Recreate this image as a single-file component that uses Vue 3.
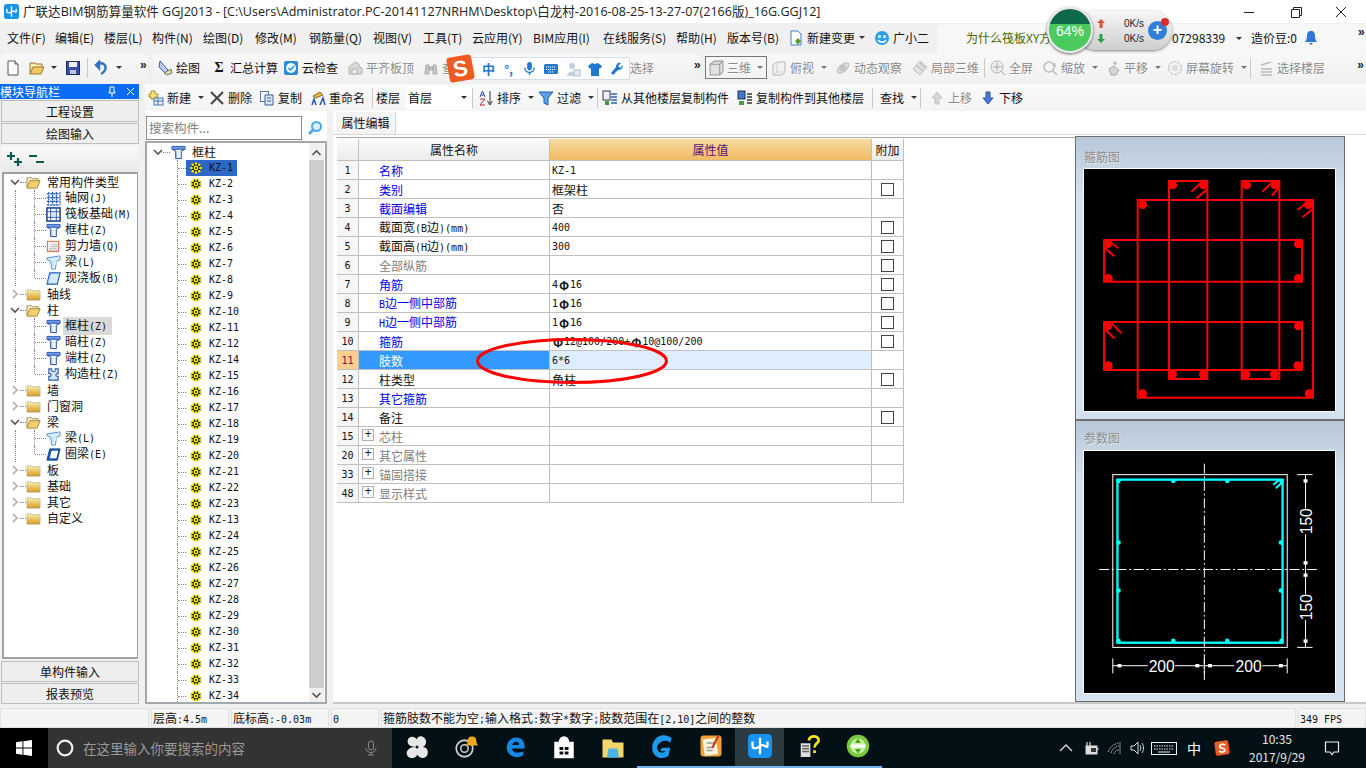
<script setup>
import { h } from 'vue'

const icons = {
  column: '<path d="M1 1.500h14v3l-4 2v8H5v-8l-4-2z" fill="#eef5ff" stroke="#1a46a0"/><path d="M1.500 2h13v2.500h-13z" fill="#6f9fe6"/><path d="M1 4.500h14" stroke="#1a46a0"/><path d="M6 7v7" stroke="#8db6ee"/>',
  grid: '<path d="M1 3h14M1 7h14M1 11h14M1 15h14M3 1v14M7 1v14M11 1v14M15 1v14" stroke="#1f55b0" stroke-width="1.200" stroke-dasharray="2.500 .8"/>',
  raft: '<rect x="1" y="1" width="14" height="14" fill="#fff" stroke="#163f86" stroke-width="1.600"/><path d="M1 5h14M1 11h14M5 1v14M11 1v14" stroke="#1f55a8"/><rect x="6" y="6" width="4" height="4" fill="#cfe0f5"/>',
  wall: '<rect x="1.500" y="2.500" width="12" height="11" fill="#f2f2f2" stroke="#dc6a30"/><path d="M3 12h9M4 10h8M5 8h7M7 6h5" stroke="#8a8a8a" stroke-dasharray="1 1"/><path d="M15 5v1M15 9v1" stroke="#dc6a30"/>',
  beam: '<path d="M1 3l14-2v4l-4 2-1 8H6L5 7 1 5z" fill="#cfe6fb" stroke="#4a90d8"/><path d="M6 6l8-4M8 14l3-7" stroke="#fff"/>',
  slab: '<path d="M4 2h11l-3 12H1z" fill="#d7e8fb" stroke="#1f5fb8" stroke-width="1.200"/><path d="M5 3l-3 10" stroke="#8ab8ef"/>',
  ring: '<path d="M4 2h11l-3 12H1z" fill="#1f5fb8" stroke="#123f86"/><path d="M6 4h7l-2 8H4z" fill="#fff"/>',
  puzzle: '<path d="M3 2h3v1a2 2 0 0 0 4 0V2h3v5h-1a1.500 1.500 0 0 0 0 3h1v4H3v-4h1a1.500 1.500 0 0 0 0-3H3z" fill="#d4e4f8" stroke="#2c5ca8" stroke-width="1.200"/>',
  folder: '<linearGradient id="fg" x1="0" y1="0" x2="0" y2="1"><stop offset="0" stop-color="#fdf0b0"/><stop offset="1" stop-color="#d99a1c"/></linearGradient><path d="M1 3h5l1 1h8v10H1z" fill="url(#fg)" stroke="#b0a890" stroke-width=".7"/>',
  folderOpen: '<path d="M1 13V3h5l1 1h6v2" fill="#fff3c4" stroke="#9a8a60"/><path d="M1 14l3-8h11l-3 8z" fill="#f3cf72" stroke="#a8863a"/>',
  gear: '<circle cx="6" cy="6" r="5" fill="#222"/><g fill="#f8f000"><circle cx="6" cy="1.500" r="1.300"/><circle cx="6" cy="10.500" r="1.300"/><circle cx="1.500" cy="6" r="1.300"/><circle cx="10.500" cy="6" r="1.300"/><circle cx="2.800" cy="2.800" r="1.300"/><circle cx="9.200" cy="2.800" r="1.300"/><circle cx="2.800" cy="9.200" r="1.300"/><circle cx="9.200" cy="9.200" r="1.300"/><circle cx="6" cy="6" r="2.400"/></g><circle cx="6" cy="6" r="1" fill="#222"/>',
  newdoc: '<path d="M3 1h7l3 3v11H3z" fill="#fff" stroke="#555"/><path d="M10 1v3h3" fill="#ddd" stroke="#555"/>',
  open: '<path d="M1 14V3h5l1 1h6v3" fill="#fde9a8" stroke="#96793a"/><path d="M1 14l3-7h11l-3 7z" fill="#f2c65e" stroke="#96793a"/>',
  save: '<rect x="1.500" y="1.500" width="13" height="13" fill="#3a4ea8" stroke="#1a2a6a"/><rect x="4" y="2" width="8" height="5" fill="#eef"/><rect x="5" y="10" width="6" height="4" fill="#bcc6dc"/>',
  undo: '<path d="M5 2v6l-3-3zM4 4c5-2 9 1 7 6-1 2-2 3-4 4" fill="none" stroke="#2f6fc0" stroke-width="2.400"/>',
  draw: '<path d="M3 1l8 9-3 3-6-6z" fill="#b7cdf2" stroke="#3c5fa8"/><path d="M7 13l7-4 1 4-5 2z" fill="#e6d8a0" stroke="#777"/>',
  cloud: '<rect x="1" y="1" width="14" height="14" rx="2" fill="#2a8bdc"/><circle cx="8" cy="8" r="5" fill="#eaf5ff"/><path d="M5.500 8l2 2 3.500-4" fill="none" stroke="#2a8bdc" stroke-width="1.500"/>',
  flat: '<path d="M2 14V7l6-5 4 2v3l3 1v6z" fill="#d8d8d8" stroke="#b4b4b4"/><path d="M5 9h5v5H5z" fill="#efefef" stroke="#b4b4b4"/>',
  bino: '<path d="M2 14l1-9h3v9zM10 14V5h3l1 9zM6 7h4v3H6z" fill="#c8c8c8" stroke="#aaa"/>',
  cube: '<path d="M2 5l4-3h8v10l-3 3H2z" fill="#e2e2e2" stroke="#999"/><path d="M2 5h9v10M11 5l3-3" fill="none" stroke="#999"/>',
  cube2: '<path d="M2 5l4-3h8v10l-3 3H2z" fill="#f2f2f2" stroke="#b5b5b5"/><path d="M6 2v10h8M6 12l-4 3" fill="none" stroke="#ccc"/>',
  orbit: '<ellipse cx="8" cy="8" rx="7" ry="3.500" transform="rotate(-40 8 8)" fill="#ddd" stroke="#bbb"/><circle cx="8" cy="8" r="3.500" fill="#c4c4c4"/>',
  local: '<path d="M8 1l7 6-7 8-7-6z" fill="#e2e2e2" stroke="#bbb"/><path d="M4 5l7 6M8 3l5 5" stroke="#aaa"/>',
  full: '<circle cx="7" cy="7" r="6" fill="#eee" stroke="#b5b5b5"/><path d="M7 3v8M3 7h8M11 11l4 4" stroke="#aaa"/>',
  zoom: '<circle cx="7" cy="7" r="5" fill="#f4f4f4" stroke="#bbb" stroke-width="1.500"/><path d="M11 11l4 4M13 3v4" stroke="#bbb" stroke-width="1.500"/>',
  pan: '<path d="M10 1v4M8 3h4M4 9l5-3 5 4-3 5H6z" fill="#d5d5d5" stroke="#aaa"/>',
  rot: '<circle cx="8" cy="8" r="6.500" fill="#f2f2f2" stroke="#bbb" stroke-dasharray="3 1"/><circle cx="8" cy="8" r="3" fill="#ddd"/>',
  floors: '<path d="M3 5l10-3M3 9h11M3 12h11M3 15h11" stroke="#bbb" stroke-width="1.500"/>',
  add: '<path d="M3 1h4v3h3v3H7v2H3V7H1V4h2z" fill="#f5e27a" stroke="#a8922a"/><rect x="6" y="8" width="9" height="7" fill="#e4eefa" stroke="#5577aa"/><path d="M6 11h9M10 8v7" stroke="#5577aa"/>',
  del: '<path d="M2 2l12 12M14 2L2 14" stroke="#444" stroke-width="2"/>',
  copy: '<rect x="1.500" y="1.500" width="8" height="10" fill="#f8f8f8" stroke="#5577aa"/><path d="M6 5h8v10H6z" fill="#dbe7f6" stroke="#3f6096"/><path d="M8 8h4M8 11h4" stroke="#3f6096"/>',
  rename: '<path d="M3 6l7-4 3 3-7 3z" fill="#e0b94a" stroke="#8a6a20"/><path d="M2 15l2-6 2 6M10 15l3-7 2 7" fill="none" stroke="#2b57a6" stroke-width="1.500"/>',
  sort: '<path d="M12 1v13M9.500 11l2.500 4 2.500-4" fill="none" stroke="#333"/><path d="M2 7l2.500-6L7 7M3 5h3" fill="none" stroke="#2a4f9e"/><path d="M2 9h5l-5 6h5" fill="none" stroke="#b03030"/>',
  filter: '<path d="M1 2h14l-5 6v7l-4-2V8z" fill="#5aa0e8" stroke="#1f5fa8"/>',
  fromfloor: '<rect x="1" y="1" width="7" height="9" fill="#eef" stroke="#335"/><path d="M3 11h4v4H3z" fill="#3a9a3a"/><path d="M9 4h6M9 7h6M9 10h6M9 13h6" stroke="#2f66b8" stroke-width="1.500"/>',
  tofloor: '<rect x="1" y="1" width="7" height="8" fill="#3f78d0" stroke="#234"/><path d="M2 11h5v4H2z" fill="#4a9e4a"/><path d="M10 4h5M10 7h5M10 10h5M10 13h5" stroke="#333" stroke-width="1.500"/>',
  up: '<path d="M8 2l5 6h-3v6H6V8H3z" fill="#d5d5d5" stroke="#c4c4c4"/>',
  down: '<path d="M6 2h4v6h3l-5 6-5-6h3z" fill="#4a78d8" stroke="#2c52a8"/>',
  changeDoc: '<path d="M3 1h7l3 3v11H3z" fill="#fff" stroke="#3a80d0"/><path d="M10 8l3 3-3 4-3-4z" fill="#5aa02c"/>',
  mascot: '<circle cx="8" cy="8" r="7" fill="#2aa0ec"/><circle cx="5.500" cy="6.500" r="1.500" fill="#fff"/><circle cx="10.500" cy="6.500" r="1.500" fill="#fff"/><path d="M4 10c2 3 6 3 8 0" fill="none" stroke="#fff" stroke-width="1.400"/>',
  bell: '<path d="M8 1c3 0 4 2 4 5 0 3 1 5 2 6H2c1-1 2-3 2-6 0-3 1-5 4-5zM6 13h4l-2 2z" fill="#2a78dc"/>',
  mic: '<rect x="5.500" y="1" width="5" height="9" rx="2.500" fill="#1f78d0"/><path d="M3 7c0 7 10 7 10 0M8 12v3" fill="none" stroke="#1f78d0" stroke-width="1.400"/>',
  kb: '<rect x="1" y="3" width="14" height="10" rx="1.500" fill="#1f78d0"/><path d="M3 6h10M3 8.500h10M5 11h6" stroke="#fff" stroke-dasharray="1.200 .8"/>',
  user: '<circle cx="7" cy="5" r="3" fill="#c0d0e0"/><path d="M2 15c0-6 10-6 10 0z" fill="#c0d0e0"/><rect x="9" y="9" width="6" height="6" fill="#e4eaf0" stroke="#b0c0d0"/>',
  shirt: '<path d="M5 2l3 1 3-1 4 3-2 3-1-1v8H4V7L3 8 1 5z" fill="#1f78d0"/>',
  wrench: '<path d="M14 4l-3 3-2-2 3-3c-3-1-5 1-5 4L2 12l2 2 5-5c3 0 5-2 5-5z" fill="#1f78d0"/>',
  winlogo: '<path d="M0 2.200L6.500 1.300v6.200H0zM7.400 1.200L16 0v7.500H7.400zM0 8.400h6.500v6.300L0 13.800zM7.400 8.400H16V16l-8.600-1.200z" fill="#fff"/>',
  micOutline: '<rect x="5.500" y="1" width="5" height="9" rx="2.500" fill="none" stroke="#8a8a8a"/><path d="M3 8c0 6 10 6 10 0M8 12.500V15M5 15h6" fill="none" stroke="#8a8a8a"/>',
  pinwheel: '<path d="M8 8C3 8 1 6 2 3s5-2 6 0c0-2 3-3 5-1s1 5-1 6c2 0 4 2 3 5s-5 3-7 0c0 2-3 3-5 2S0 11 3 9c1-.7 3-1 5-1z" fill="#e8e8e8"/><circle cx="8" cy="8" r="1" fill="#0a1a20"/>',
  swirl: '<circle cx="7" cy="9" r="5.500" fill="none" stroke="#ccc" stroke-width="1.200"/><circle cx="7" cy="9" r="2.500" fill="none" stroke="#ccc"/><path d="M12 1c2 0 3 1 3 4l1 2H8l1-2c0-3 1-4 3-4z" fill="#eda91f"/>',
  edge: '<path d="M2 9c0-5 3-8 7-8s6 3 6 7v1H6c0 3 4 4 8 2v3c-5 3-11 1-12-5zM6 6.500h5c0-3-4-3-5 0z" fill="#1689e8"/>',
  store: '<path d="M2 5h12v10H2zM5 5c0-5 6-5 6 0" fill="#fff" stroke="#fff"/><path d="M5 8h2.500v2H5zM8.500 8H11v2H8.500zM5 11h2.500v2H5zM8.500 11H11v2H8.500z" fill="#111"/>',
  explorer: '<path d="M1 3h6l1 2h7v10H1z" fill="#f5d66c"/><path d="M5 9h6l1 6H4z" fill="#4cb3e8"/>',
  gApp: '<path d="M14 3C8-1 2 3 2 9s6 8 10 5l1-5H8l-1 2h3c-1 2-5 1-5-2s5-6 8-3z" fill="#1e9aec"/>',
  note: '<rect x="1" y="1" width="14" height="14" rx="2" fill="#f2a03a"/><rect x="3" y="3" width="9" height="11" fill="#fff4d8" transform="rotate(-8 8 8)"/><path d="M5 6h5M5 9h5M5 11h4" stroke="#999"/><path d="M13 1l-4 8" stroke="#c8401a" stroke-width="1.500"/>',
  plusApp: '<rect width="16" height="16" rx="3" fill="#1693ee"/><path d="M8 2.500v11M3 5v3c0 2 3 2 5 0s5 2 5 0V5" fill="none" stroke="#fff" stroke-width="1.500"/>',
  help: '<rect x="2" y="6" width="7" height="10" fill="#ddd"/><path d="M3 8h5M3 10h5M3 12h5" stroke="#666"/><path d="M8 4c0-4 7-4 7 0 0 2-3 2-3 5M12 11v2" fill="none" stroke="#f5e31a" stroke-width="2"/>',
  greenApp: '<circle cx="8" cy="8" r="7.500" fill="#7ac943"/><circle cx="8" cy="8" r="5" fill="#c8f0a0"/><path d="M3 8h10" stroke="#fff" stroke-width="2"/><path d="M8 3l2 3H6zM8 13l-2-3h4z" fill="#4a9e20"/>',
  cortana: '<circle cx="8" cy="8" r="6.500" fill="none" stroke="#eee" stroke-width="2"/>',
  caretUp: '<path d="M2 11l6-6 6 6" fill="none" stroke="#ddd" stroke-width="1.300"/>',
  battery: '<rect x="3" y="6" width="11" height="8" fill="#ddd" stroke="#ddd"/><path d="M4 2v4M7 2v4M14 9h2" stroke="#ddd" stroke-width="1.200"/><rect x="8" y="8" width="5" height="4" fill="#333"/>',
  wifi: '<path d="M1 12a14 14 0 0 1 11-9M4 13a9 9 0 0 1 8-7M7 14a5 5 0 0 1 5-4" fill="none" stroke="#ccc" stroke-dasharray="1.500 1"/><path d="M13 2v12" stroke="#888"/>',
  sound: '<path d="M2 6h3l4-4v12l-4-4H2z" fill="none" stroke="#ddd"/><path d="M11 5c1 2 1 4 0 6M13 3c2 3 2 7 0 10" fill="none" stroke="#ddd"/>',
  keyboard: '<rect x=".5" y="2.500" width="25" height="12" fill="none" stroke="#eee"/><path d="M3 6h20M3 9h20" stroke="#eee" stroke-dasharray="1.500 1"/><path d="M7 12h12" stroke="#eee"/>',
  sogouTray: '<rect x="1" y="1" width="14" height="14" rx="2" transform="rotate(-8 8 8)" fill="#ea5a22"/><path d="M11 5c-3-2-6 0-5 2s5 1 5 3-3 3-6 1" fill="none" stroke="#fff" stroke-width="1.800"/>',
  notif: '<path d="M1.500 2h13v10H10l-2 2.500L6 12H1.500z" fill="none" stroke="#eee" stroke-width="1.200"/>',
  chevDown: '<path d="M1 3l4 4 4-4" fill="none" stroke="#555" stroke-width="1.600"/>',
  chevRight: '<path d="M3 1l4 4-4 4" fill="none" stroke="#aaa" stroke-width="1.600"/>',
  plusplus: '<path d="M4 1v8M0 5h8M11 7v8M7 11h8" stroke="#0c5a52" stroke-width="2.200"/>',
  minusminus: '<path d="M0 5h8M7 11h8" stroke="#0c5a52" stroke-width="2.200"/>',
  search: '<circle cx="9.500" cy="6.500" r="4.500" fill="#d8f0ff" stroke="#4aa8e8" stroke-width="2"/><path d="M6 10l-4 4" stroke="#4aa8e8" stroke-width="2.600"/>'
}

const Ic = (p) => h('svg', { class: 'ic', width: p.w || 16, height: p.h || p.w || 16, viewBox: p.vb || '0 0 16 16', innerHTML: icons[p.n] })
Ic.props = ['n', 'w', 'h', 'vb']

const T = (p) => p.s.split(/([\x00-\x7f]+|Φ)/).filter(Boolean).map((t) => h('span', { class: t === 'Φ' ? 'phi' : /^[\x00-\x7f]/.test(t) ? 'l' : 'c' }, t))
T.props = ['s']

const place = (list, end) => list.map((it, i) => ({ ...it, w: (i + 1 < list.length ? list[i + 1].x : end) - it.x }))

const menus = place([
  { x: 7, t: '文件(F)' }, { x: 55, t: '编辑(E)' }, { x: 104, t: '楼层(L)' }, { x: 152, t: '构件(N)' },
  { x: 203, t: '绘图(D)' }, { x: 255, t: '修改(M)' }, { x: 309, t: '钢筋量(Q)' }, { x: 373, t: '视图(V)' },
  { x: 423, t: '工具(T)' }, { x: 472, t: '云应用(Y)' }, { x: 533, t: 'BIM应用(I)' }, { x: 603, t: '在线服务(S)' },
  { x: 676, t: '帮助(H)' }, { x: 727, t: '版本号(B)' },
  { x: 788, t: '新建变更', i: 'changeDoc', c: 1 }, { x: 874, t: '广小二', i: 'mascot' }
], 937)

const tb2 = place([
  { x: 157, i: 'draw', t: '绘图' }, { x: 211, sym: 'Σ', t: '汇总计算' }, { x: 283, i: 'cloud', t: '云检查' },
  { x: 347, i: 'flat', t: '平齐板顶', d: 1 }, { x: 423, i: 'bino', t: '查', d: 1 }, { x: 630, t: '选择', d: 1 }
], 697)

const tb3 = place([
  { x: 771, i: 'cube2', t: '俯视', d: 1, c: 1 }, { x: 835, i: 'orbit', t: '动态观察', d: 1 }, { x: 912, i: 'local', t: '局部三维', d: 1 },
  { x: 984, sep: 1 }, { x: 990, i: 'full', t: '全屏', d: 1 }, { x: 1042, i: 'zoom', t: '缩放', d: 1, c: 1 },
  { x: 1105, i: 'pan', t: '平移', d: 1, c: 1 }, { x: 1167, i: 'rot', t: '屏幕旋转', d: 1, c: 1 }, { x: 1250, sep: 1 },
  { x: 1258, i: 'floors', t: '选择楼层', d: 1 }
], 1350)

const row2 = place([
  { x: 148, i: 'add', t: '新建', c: 1 }, { x: 209, i: 'del', t: '删除' }, { x: 259, i: 'copy', t: '复制' },
  { x: 310, i: 'rename', t: '重命名' }, { x: 372, sep: 1 }, { x: 376, t: '楼层' }, { x: 406, sel: '首层' },
  { x: 472, sep: 1 }, { x: 478, i: 'sort', t: '排序', c: 1 }, { x: 538, i: 'filter', t: '过滤', c: 1 },
  { x: 597, sep: 1 }, { x: 602, i: 'fromfloor', t: '从其他楼层复制构件' }, { x: 737, i: 'tofloor', t: '复制构件到其他楼层' },
  { x: 872, sep: 1 }, { x: 880, t: '查找', c: 1 }, { x: 920, sep: 1 }, { x: 929, i: 'up', t: '上移', d: 1 }, { x: 980, i: 'down', t: '下移' }
], 1040)

const tree = [
  { t: '常用构件类型', open: 1, kids: [['grid', '轴网(J)'], ['raft', '筏板基础(M)'], ['column', '框柱(Z)'], ['wall', '剪力墙(Q)'], ['beam', '梁(L)'], ['slab', '现浇板(B)']] },
  { t: '轴线' },
  { t: '柱', open: 1, kids: [['column', '框柱(Z)', 1], ['column', '暗柱(Z)'], ['column', '端柱(Z)'], ['puzzle', '构造柱(Z)']] },
  { t: '墙' }, { t: '门窗洞' },
  { t: '梁', open: 1, kids: [['beam', '梁(L)'], ['ring', '圈梁(E)']] },
  { t: '板' }, { t: '基础' }, { t: '其它' }, { t: '自定义' }
]

const order = [1,2,3,4,5,6,7,8,9,10,11,12,14,15,16,17,18,19,20,21,22,23,13,24,25,26,27,28,29,30,31,32,33,34]
const kz = order.map((n) => 'KZ-' + n)

const rows = [
  { n: '1', t: '名称', v: 'KZ-1', k: 'b' },
  { n: '2', t: '类别', v: '框架柱', k: 'b', cb: 1 },
  { n: '3', t: '截面编辑', v: '否', k: 'b' },
  { n: '4', t: '截面宽(B边)(mm)', v: '400', cb: 1 },
  { n: '5', t: '截面高(H边)(mm)', v: '300', cb: 1 },
  { n: '6', t: '全部纵筋', v: '', k: 'g', cb: 1 },
  { n: '7', t: '角筋', v: '4Φ16', k: 'b', cb: 1 },
  { n: '8', t: 'B边一侧中部筋', v: '1Φ16', k: 'b', cb: 1 },
  { n: '9', t: 'H边一侧中部筋', v: '1Φ16', k: 'b', cb: 1 },
  { n: '10', t: '箍筋', v: 'Φ12@100/200+Φ10@100/200', k: 'b', cb: 1 },
  { n: '11', t: '肢数', v: '6*6', picked: 1 },
  { n: '12', t: '柱类型', v: '角柱', cb: 1 },
  { n: '13', t: '其它箍筋', v: '', k: 'b' },
  { n: '14', t: '备注', v: '', cb: 1 },
  { n: '15', t: '芯柱', v: '', k: 'g', plus: 1 },
  { n: '20', t: '其它属性', v: '', k: 'g', plus: 1 },
  { n: '33', t: '锚固搭接', v: '', k: 'g', plus: 1 },
  { n: '48', t: '显示样式', v: '', k: 'g', plus: 1 }
]

const stirrupDots = [[293,150],[385,150],[515,150],[600,150],[203,209],[700,209],[98,327],[670,327],[100,430],[670,430],[98,573],[670,573],[100,692],[668,692],[293,718],[385,718],[513,718],[598,718],[203,776],[702,776]]
const stirrupRects = [[188,195,526,593],[87,315,594,125],[87,561,594,144],[282,138,115,594],[500,138,113,594]]
const stirrupHooks = [[349,170,378,143],[365,190,397,162],[562,170,590,143],[590,182,612,158],[668,225,700,198],[683,247,712,222],[105,320,130,340],[90,340,118,364],[110,565,140,595],[92,585,118,610]]
const paramDots = [[130,182],[295,182],[457,182],[620,182],[130,662],[295,662],[457,662],[620,662],[130,367],[130,511],[618,367],[618,511]]
const ticks = [[133,737],[367,737],[405,737],[618,737],[692,182],[692,428],[692,465],[692,663]]

const taskIcons = [
  { n: 'pinwheel', w: 24 }, { n: 'swirl', w: 24 }, { n: 'edge', w: 22 }, { n: 'store', w: 24 }, { n: 'explorer', w: 24 },
  { n: 'gApp', w: 26, on: 1 }, { n: 'note', w: 24, on: 1 }, { n: 'plusApp', w: 24, on: 1, act: 1 }, { n: 'help', w: 22, on: 1 }, { n: 'greenApp', w: 24, on: 1 }
]
const tray = [
  { n: 'caretUp', b: 25 }, { n: 'battery', b: 25 }, { n: 'wifi', b: 23 }, { n: 'sound', b: 21 },
  { n: 'keyboard', b: 34, w: 26, vb: '0 0 26 16' }, { t: '中', b: 26 }, { n: 'sogouTray', b: 30 }
]
</script>

<template>
  <div class="app">
    <header class="title">
      <Ic n="plusApp" :w="15" class="logo" />
      <span class="title-text">广联达BIM钢筋算量软件 GGJ2013 - [C:\Users\Administrator.PC-20141127NRHM\Desktop\白龙村-2016-08-25-13-27-07(2166版)_16G.GGJ12]</span>
      <div class="winbtns">
        <svg class="wb" width="46" height="16" viewBox="0 0 46 16"><path d="M18 8.500h10" stroke="#222" /></svg>
        <svg class="wb" width="46" height="16" viewBox="0 0 46 16"><path d="M19.500 5.500h8v8h-8zM21.500 5.500v-2h8v8h-2" fill="none" stroke="#222" /></svg>
        <svg class="wb" width="46" height="16" viewBox="0 0 46 16"><path d="M18 3l10 10M28 3L18 13" stroke="#222" /></svg>
      </div>
    </header>

    <nav class="menu">
      <div v-for="m in menus" :key="m.t" class="mi" :style="{ width: m.w + 'px' }">
        <Ic v-if="m.i" :n="m.i" :w="16" class="mi-ic" />
        <span>{{ m.t }}</span>
        <i v-if="m.c" class="caret caret-m"></i>
      </div>
      <div class="menu-right">
        <span class="news">为什么筏板XY方</span>
        <span class="acct">07298339</span>
        <i class="caret caret-a"></i>
        <span>造价豆:0</span>
        <Ic n="bell" :w="16" class="bell" />
        <span class="chev">»</span>
      </div>
    </nav>

    <div class="tb1">
      <div class="seg seg1">
        <Ic n="newdoc" /><Ic n="open" class="sp8" /><i class="caret c1"></i><Ic n="save" class="sp8" />
        <b class="sep s1"></b><Ic n="undo" /><i class="caret c1"></i><span class="chev chev1">»</span>
      </div>
      <div class="seg seg2">
        <div v-for="it in tb2" :key="it.x" class="tool" :class="{ dis: it.d }" :style="{ width: it.w + 'px' }">
          <Ic v-if="it.i" :n="it.i" /><span v-if="it.sym" class="sym">{{ it.sym }}</span>
          <span>{{ it.t }}</span>
        </div>
        <span class="chev">»</span>
      </div>
      <div class="seg seg3">
        <div class="box3d dis"><Ic n="cube" :w="17" /><span>三维</span><i class="caret"></i></div>
        <template v-for="it in tb3" :key="it.x">
          <b v-if="it.sep" class="sep" :style="{ marginRight: it.w - 1 + 'px' }"></b>
          <div v-else class="tool dis" :style="{ width: it.w + 'px' }">
            <Ic :n="it.i" /><span>{{ it.t }}</span><i v-if="it.c" class="caret"></i>
          </div>
        </template>
        <span class="chev chev3">»</span>
      </div>
    </div>

    <main class="work">
      <aside class="nav">
        <div class="nav-head">
          <span>模块导航栏</span>
          <span class="pin">
            <svg width="10" height="12" viewBox="0 0 10 12"><path d="M3 1h4v5h1v1H2V6h1zM5 7v4" fill="none" stroke="#fff" /></svg>
            <svg width="9" height="9" viewBox="0 0 9 9"><path d="M1 1l7 7M8 1L1 8" stroke="#fff" /></svg>
          </span>
        </div>
        <button class="nb nb1">工程设置</button>
        <button class="nb nb2">绘图输入</button>
        <div class="nav-tools"><Ic n="plusplus" /><Ic n="minusminus" /></div>
        <div class="tree">
          <template v-for="g in tree" :key="g.t">
            <div class="tr1">
              <Ic :n="g.open ? 'chevDown' : 'chevRight'" :w="10" vb="0 0 10 10" />
              <b class="dots"></b>
              <Ic :n="g.open ? 'folderOpen' : 'folder'" :w="15" />
              <span class="tl">{{ g.t }}</span>
            </div>
            <template v-if="g.kids">
              <div v-for="(k, i) in g.kids" :key="k[1]" class="tr2">
                <b class="guide"></b>
                <b class="conn" :class="{ last: i === g.kids.length - 1 }"><i></i></b>
                <Ic :n="k[0]" :w="15" />
                <span class="tl2" :class="{ hl: k[2] }"><T :s="k[1]" /></span>
              </div>
            </template>
          </template>
        </div>
        <button class="nb nb3">单构件输入</button>
        <button class="nb nb4">报表预览</button>
      </aside>

      <div class="right">
        <div class="tb2">
          <template v-for="it in row2" :key="it.x">
            <b v-if="it.sep" class="sep" :style="{ marginRight: it.w - 1 + 'px' }"></b>
            <div v-else-if="it.sel" class="sel"><span>{{ it.sel }}</span><i class="caret"></i></div>
            <div v-else class="tool" :class="{ dis: it.d }" :style="{ width: it.w + 'px' }">
              <Ic v-if="it.i" :n="it.i" />
              <span>{{ it.t }}</span>
              <i v-if="it.c" class="caret"></i>
            </div>
          </template>
        </div>

        <div class="content">
          <section class="list">
            <div class="searchbar">
              <div class="searchbox">搜索构件...</div>
              <Ic n="search" :w="16" class="search-ic" />
            </div>
            <div class="listpanel">
              <div class="listtree">
                <div class="root">
                  <Ic n="chevDown" :w="10" vb="0 0 10 10" />
                  <b class="dots d2"></b>
                  <Ic n="column" :w="15" />
                  <span class="rootname">框柱</span>
                </div>
                <div v-for="(name, i) in kz" :key="name" class="kz">
                  <b class="conn kconn"><i></i></b>
                  <div class="kzitem" :class="{ on: i === 0 }">
                    <Ic n="gear" :w="12" vb="0 0 12 12" />
                    <T :s="name" />
                  </div>
                </div>
              </div>
              <div class="scroll">
                <svg width="15" height="14" viewBox="0 0 15 14"><path d="M3.500 9l4-4 4 4" fill="none" stroke="#555" stroke-width="1.600" /></svg>
                <div class="thumb"></div>
                <svg width="15" height="14" viewBox="0 0 15 14"><path d="M3.500 5l4 4 4-4" fill="none" stroke="#555" stroke-width="1.600" /></svg>
              </div>
            </div>
          </section>

          <section class="pane">
            <div class="tabs"><div class="tab">属性编辑</div></div>
            <div class="pane-body">
              <div class="grid-wrap">
                <div class="grid">
                  <div class="gr head">
                    <div class="gc"></div>
                    <div class="gc gc-c">属性名称</div>
                    <div class="gc gc-c val-h">属性值</div>
                    <div class="gc gc-c">附加</div>
                  </div>
                  <div v-for="r in rows" :key="r.n" class="gr" :class="{ picked: r.picked }">
                    <div class="gc num"><T :s="r.n" /></div>
                    <div class="gc name" :class="r.k">
                      <span v-if="r.plus" class="plus">+</span>
                      <span class="nm"><T :s="r.t" /></span>
                    </div>
                    <div class="gc val"><T :s="r.v" /></div>
                    <div class="gc add"><b v-if="r.cb" class="cb"></b></div>
                  </div>
                </div>
              </div>
              <div class="pics">
                <div class="pic pic1">
                  <div class="pic-t t1">箍筋图</div>
                  <svg class="canvas" viewBox="27 102 753 726">
                    <rect v-for="(r, i) in stirrupRects" :key="i" :x="r[0]" :y="r[1]" :width="r[2]" :height="r[3]" fill="none" stroke="#f00" stroke-width="6" stroke-linejoin="round" />
                    <circle v-for="(d, i) in stirrupDots" :key="'d' + i" :cx="d[0]" :cy="d[1]" r="13" fill="#f00" />
                    <line v-for="(l, i) in stirrupHooks" :key="'h' + i" :x1="l[0]" :y1="l[1]" :x2="l[2]" :y2="l[3]" stroke="#f00" stroke-width="6" />
                  </svg>
                </div>
                <div class="pic pic2">
                  <div class="pic-t t2">参数图</div>
                  <svg class="canvas" viewBox="27 92 753 727">
                    <rect x="113" y="163" width="524" height="519" fill="none" stroke="#fff" stroke-width="3" />
                    <rect x="127" y="178" width="496" height="490" fill="none" stroke="#0ff" stroke-width="7" />
                    <circle v-for="(d, i) in paramDots" :key="i" :cx="d[0]" :cy="d[1]" r="7" fill="#0ff" />
                    <path d="M595 193l17-13M603 204l19-18" stroke="#0ff" stroke-width="6" />
                    <path d="M388 130V780M72 448H730" stroke="#fff" stroke-width="3" stroke-dasharray="30 8 6 8" />
                    <path d="M692 163V265M692 342V523M692 600V682M667 163H713M667 682H713M113 737H218M300 737H478M562 737H637M113 715V760M637 715V760M388 715V760" stroke="#fff" stroke-width="3" fill="none" />
                    <rect v-for="(d, i) in ticks" :key="'t' + i" :x="d[0] - 6" :y="d[1] - 5" width="12" height="10" fill="#fff" />
                    <text x="260" y="755" class="dim">200</text>
                    <text x="521" y="755" class="dim">200</text>
                    <text transform="translate(710 303) rotate(-90)" class="dim">150</text>
                    <text transform="translate(710 561) rotate(-90)" class="dim">150</text>
                  </svg>
                </div>
              </div>
            </div>
          </section>
        </div>
      </div>
    </main>

    <footer class="status">
      <div class="st st0"></div>
      <div class="st st1"><T s="层高:4.5m" /></div>
      <div class="st st2"><T s="底标高:-0.03m" /></div>
      <div class="st st3"><T s="0" /></div>
      <div class="st st4"><T s="箍筋肢数不能为空;输入格式:数字*数字;肢数范围在[2,10]之间的整数" /></div>
      <div class="st st5"><T s="349 FPS" /></div>
    </footer>

    <div class="taskbar">
      <div class="start"><Ic n="winlogo" :w="16" /></div>
      <div class="tsearch">
        <Ic n="cortana" :w="18" />
        <span class="tsearch-t">在这里输入你要搜索的内容</span>
        <Ic n="micOutline" :w="16" class="tmic" />
      </div>
      <div v-for="t in taskIcons" :key="t.n" class="ti" :class="{ on: t.on, act: t.act }">
        <Ic :n="t.n" :w="t.w" />
      </div>
      <div class="tray">
        <div v-for="(t, i) in tray" :key="i" class="tr" :style="{ width: t.b + 'px' }">
          <span v-if="t.t" class="tray-t">{{ t.t }}</span>
          <Ic v-else :n="t.n" :w="t.w || 16" :h="16" :vb="t.vb" />
        </div>
        <div class="clock"><span>10:35</span><span>2017/9/29</span></div>
        <div class="tnotif"><Ic n="notif" :w="16" /></div>
      </div>
    </div>

    <!-- floating overlays -->
    <div class="gauge">
      <div class="pill">
        <div class="speeds">
          <div><svg width="8" height="9" viewBox="0 0 8 9"><path d="M4 0l4 4H5.500v5h-3V4H0z" fill="#e0503a" /></svg><span>0K/s</span></div>
          <div><svg width="8" height="9" viewBox="0 0 8 9"><path d="M2.500 0h3v5H8L4 9 0 5h2.500z" fill="#2aa04a" /></svg><span>0K/s</span></div>
        </div>
        <div class="plusball">+<i></i></div>
      </div>
      <div class="ball">64%</div>
    </div>

    <div class="sogou">
      <div class="sogou-s">S</div>
      <div class="sogou-bar">
        <span class="zh">中</span><span class="dotcomma">°,</span>
        <Ic n="mic" :w="15" /><Ic n="kb" :w="16" /><Ic n="user" :w="16" /><Ic n="shirt" :w="16" /><Ic n="wrench" :w="16" />
      </div>
    </div>

    <svg class="ring-mark" width="200" height="52" viewBox="0 0 200 52">
      <ellipse cx="100" cy="26" rx="94.500" ry="21.500" fill="none" stroke="#f00" stroke-width="3" />
    </svg>
  </div>
</template>

<style scoped>
.app { position: relative; width: 1366px; height: 768px; overflow: hidden; display: flex; flex-direction: column; background: #f0f0f0; font: 12px/16px "Noto Sans CJK SC", sans-serif; color: #111; }
.ic { flex: none; display: block; }
.caret { display: block; flex: none; width: 0; height: 0; border: 3px solid transparent; border-top: 3px solid #333; border-bottom: 0; }
.sep { display: block; flex: none; width: 1px; height: 20px; background: #c8c8c8; }
.chev { font: 12px/12px "Liberation Sans", sans-serif; font-weight: 700; color: #222; }

.title { height: 23px; flex: none; background: #fff; display: flex; align-items: center; padding-left: 4px; }
.logo { margin-right: 4px; }
.title-text { font: 12.550px/16px "Open Sans", "Noto Sans CJK SC", sans-serif; white-space: nowrap; color: #222; }
.winbtns { margin-left: auto; display: flex; padding-right: 2px; }
.wb { display: block; }

.menu { height: 31px; flex: none; display: flex; align-items: center; padding: 0 0 2px 7px; box-sizing: border-box; background: #f0f0f0; }
.mi { flex: none; display: flex; align-items: center; white-space: nowrap; }
.mi-ic { margin-right: 3px; }
.caret-m { margin-left: 4px; }
.menu-right { flex: 1; align-self: stretch; display: flex; align-items: center; background: #f7f7f7; border-radius: 6px 0 0 0; margin: 1px 0 -2px; padding: 0 0 2px 29px; box-sizing: border-box; }
.news { color: #4a6a00; width: 206px; white-space: nowrap; }
.acct { width: 64px; }
.caret-a { margin-right: 9px; }
.bell { margin-left: 6px; }
.menu-right .chev { margin: 0 0 12px 39px; }

.tb1 { height: 30px; flex: none; display: flex; }
.seg { height: 30px; padding-bottom: 3px; box-sizing: border-box; display: flex; align-items: center; background: linear-gradient(#f8f8f8, #f0f0f0); border-radius: 4px; }
.seg1 { width: 148px; padding-left: 5px; }
.sp8 { margin-left: 8px; }
.c1 { margin-left: 6px; }
.s1 { margin: 0 6px 0 6px; }
.chev1 { margin: 0 0 6px 18px; }
.seg2 { width: 546px; margin-left: 5px; padding-left: 4px; }
.seg3 { flex: 1; margin-left: 6px; }
.chev3 { margin-left: auto; margin-right: 2px; margin-bottom: 6px; }
.seg2 .chev { margin: 0 0 6px -3px; }
.tool { flex: none; display: flex; align-items: center; gap: 3px; white-space: nowrap; }
.sym { width: 16px; font: 700 14px/16px "Liberation Serif", serif; text-align: center; }
.dis { color: #8a8a8a; text-shadow: 1px 1px 0 #fff; }
.dis .caret { border-top-color: #777; margin-left: 4px; }
.tool .caret { margin-left: 4px; }
.box3d { flex: none; width: 62px; height: 23px; box-sizing: border-box; border: 1px solid #777; display: flex; align-items: center; gap: 2px; padding-left: 2px; margin-right: 4px; }

.work { flex: 1; min-height: 0; display: flex; }
.nav { width: 139px; flex: none; display: flex; flex-direction: column; padding-bottom: 4px; box-sizing: border-box; }
.nav-head { height: 15px; flex: none; background: #0a6cf5; color: #fff; display: flex; align-items: center; justify-content: space-between; overflow: hidden; padding-right: 4px; }
.pin { display: flex; align-items: center; gap: 9px; }
.nb { display: block; flex: none; width: 138px; margin: 0 0 0 1px; padding: 0; border: 1px solid #bdbdbd; background: #eeeeee; font: inherit; color: #111; text-align: center; }
.nb1 { height: 22px; margin-top: 1px; padding-top: 1px; }
.nb2 { height: 21px; margin-top: 1px; }
.nb3 { height: 21px; margin-top: 2px; }
.nb4 { height: 21px; margin-top: 1px; }
.nav-tools { height: 26px; flex: none; margin: 2px 0 0 2px; display: flex; align-items: center; gap: 6px; padding-left: 5px; background: linear-gradient(#fafafa, #e8e8e8); }
.tree { flex: 1; min-height: 0; margin: 0 1px 0 2px; background: #fff; border: 2px solid #9ca3a8; border-width: 2px 1px 2px 2px; overflow: hidden; }
.tr1, .tr2 { height: 16px; display: flex; align-items: center; white-space: nowrap; }
.tr1 { padding-left: 6px; }
.dots { display: block; flex: none; width: 6px; border-bottom: 1px dotted #888; }
.d2 { width: 7px; margin-right: 1px; }
.tl { margin-left: 6px; }
.tr2 { padding-left: 11px; }
.guide { display: block; flex: none; align-self: stretch; width: 18px; border-left: 1px dotted #888; }
.conn { display: block; flex: none; align-self: stretch; width: 11px; border-left: 1px dotted #888; }
.conn i { display: block; height: 8px; border-bottom: 1px dotted #888; }
.conn.last { align-self: flex-start; height: 8px; }
.tl2 { margin-left: 2px; padding: 0 2px; line-height: 16px; }
.tl2.hl { background: #d9d9d9; padding-right: 5px; }

.right { flex: 1; min-width: 0; margin-left: 6px; display: flex; flex-direction: column; }
.tb2 { height: 27px; flex: none; display: flex; align-items: center; padding-left: 3px; background: linear-gradient(#fafafa, #f4f4f4); }
.sel { flex: none; width: 66px; height: 24px; background: #fff; display: flex; align-items: center; justify-content: space-between; box-sizing: border-box; padding: 0 5px 0 2px; }
.content { flex: 1; min-height: 0; display: flex; padding-bottom: 4px; }

.list { width: 182px; flex: none; display: flex; flex-direction: column; }
.searchbar { height: 30px; flex: none; display: flex; align-items: center; background: #fff; padding: 5px 0 1px 1px; box-sizing: border-box; }
.searchbox { width: 156px; height: 24px; box-sizing: border-box; border: 1px solid #8a8a8a; color: #808080; padding-left: 2px; line-height: 22px; font-size: 12.500px; }
.search-ic { margin-left: 5px; }
.listpanel { flex: 1; min-height: 0; display: flex; background: #fff; border: 2px solid #a2a8ac; overflow: hidden; }
.listtree { flex: 1; min-width: 0; overflow: hidden; padding-top: 1px; }
.root { height: 16px; display: flex; align-items: center; padding-left: 6px; }
.rootname { margin-left: 6px; }
.kz { height: 16px; display: flex; align-items: stretch; padding-left: 30px; }
.kconn { width: 8px; }
.kzitem { display: flex; align-items: center; gap: 7px; padding: 0 4px; }
.kzitem.on { background: #2d68c4; }
.scroll { width: 15px; flex: none; margin: 0 1px 0 0; display: flex; flex-direction: column; justify-content: space-between; background: #f0f0f0; padding-top: 3px; box-sizing: border-box; }
.thumb { flex: 1; background: #cdcdcd; }

.pane { flex: 1; min-width: 0; margin-left: 6px; background: #fff; display: flex; flex-direction: column; border-bottom: 2px solid #c8c8c8; }
.tabs { height: 23px; flex: none; border-bottom: 1px solid #d8d8d8; box-sizing: border-box; margin-top: 1px; }
.tab { width: 59px; height: 22px; margin-left: 3px; background: #f4f4f4; border-right: 1px solid #d8d8d8; text-align: center; line-height: 21px; }
.pane-body { flex: 1; min-height: 0; display: flex; padding-top: 2px; }
.grid-wrap { width: 739px; flex: none; margin-left: 3px; border-top: 1px solid #a8a8a8; box-sizing: border-box; padding: 1px 0 0 1px; height: 60px; }
.grid { width: 567px; }
.gr { display: grid; grid-template-columns: 22px 191px 322px 32px; height: 19px; box-sizing: border-box; border-bottom: 1px solid #c0c0c0; }
.gr.head { height: 22px; }
.gc { border-right: 1px solid #c0c0c0; box-sizing: border-box; display: flex; align-items: center; overflow: hidden; white-space: nowrap; }
.head .gc { background: linear-gradient(#fbfbfb, #ececec); }
.head .val-h { background: linear-gradient(#f9dba0, #f0bb62); color: #56107a; }
.gc-c { justify-content: center; }
.num { justify-content: center; background: #f6f6f6; padding-top: 1px; }
.name { padding: 1px 0 0 20px; position: relative; }
.name.b { color: #0000f0; }
.name.g { color: #808080; }
.plus { position: absolute; left: 3px; top: 2px; width: 12px; height: 12px; box-sizing: border-box; border: 1px solid #b0b0b0; color: #222; font: 12px/10px "Liberation Mono", monospace; text-align: center; }
.val { padding: 1px 0 0 2px; }
.add { justify-content: center; }
.cb { display: block; width: 13px; height: 13px; box-sizing: border-box; border: 1px solid #444; background: #fff; }
.picked .num { background: #fad08c; color: #7a1050; }
.picked .name { background: #3399ff; color: #fff; }
.picked .val { background: #deeeff; }

.pics { width: 270px; flex: none; display: flex; flex-direction: column; margin-top: -1px; }
.pic { box-sizing: border-box; border: 1px solid #6e6e6e; background: linear-gradient(#b8c8d8, #d4e1ee 60px); padding: 0 9px 0 8px; color: #8c8c8c; }
.pic1 { height: 284px; }
.pic2 { height: 282px; }
.pic-t { box-sizing: border-box; line-height: 20px; text-shadow: 1px 1px 0 #e8e8e8; }
.t1 { height: 32px; padding-top: 10px; }
.t2 { height: 30px; padding-top: 7px; }
.canvas { display: block; width: 251px; height: 242px; background: #000; outline: 1px solid #fff; }
.dim { fill: #fff; font: 47px "Liberation Sans", sans-serif; text-anchor: middle; }

.status { height: 20px; flex: none; display: flex; gap: 2px; background: #f0f0f0; box-sizing: border-box; }
.st { box-sizing: border-box; border: 1px solid #e2e2e2; background: #f4f4f4; padding-left: 1px; line-height: 18px; white-space: nowrap; overflow: hidden; }
.st0 { width: 149px; }
.st1 { width: 78px; }
.st2 { width: 98px; }
.st3 { width: 48px; }
.st4 { width: 915px; }
.st5 { flex: 1; }

.taskbar { height: 40px; flex: none; display: flex; background: #031016; color: #ddd; }
.start { width: 48px; flex: none; background: #000; display: flex; align-items: center; justify-content: center; }
.tsearch { width: 344px; flex: none; background: #333; display: flex; align-items: center; padding-left: 8px; box-sizing: border-box; }
.tsearch-t { margin-left: 9px; color: #9a9a9a; font-size: 13.500px; }
.tmic { margin-left: auto; margin-right: 13px; }
.ti { width: 49px; flex: none; box-sizing: border-box; display: flex; align-items: center; justify-content: center; padding-bottom: 2px; }
.ti:first-of-type { margin-left: 2px; }
.ti.on { border-bottom: 2px solid #6fb4ea; background-clip: padding-box; }
.ti.act { background: #2c3b42; }
.tray { margin-left: auto; display: flex; align-items: center; }
.tr { display: flex; align-items: center; justify-content: center; }
.tray-t { font-size: 14px; color: #fff; }
.clock { width: 80px; display: flex; flex-direction: column; align-items: center; color: #e8e8e8; line-height: 18px; }
.tnotif { width: 49px; padding-left: 7px; box-sizing: border-box; }

.gauge { position: absolute; left: 1047px; top: 7px; width: 130px; height: 50px; }
.pill { position: absolute; left: 29px; top: 4px; width: 96px; height: 39px; border-radius: 20px; background: linear-gradient(#f6f6f6, #cfcfcf); box-shadow: 0 1px 3px rgba(0,0,0,.5); }
.speeds { position: absolute; left: 21px; top: 5px; width: 47px; font: 10px/15px "Liberation Sans", sans-serif; color: #222; }
.speeds div { display: flex; justify-content: space-between; align-items: center; }
.plusball { position: absolute; left: 72px; top: 10px; width: 19px; height: 19px; border-radius: 50%; background: #2f7fd8; color: #fff; text-align: center; font: 700 16px/18px "Liberation Sans", sans-serif; }
.plusball i { position: absolute; right: -2px; top: -3px; width: 8px; height: 8px; border-radius: 50%; background: #e02a2a; }
.ball { position: absolute; left: 0; top: 0; width: 46px; height: 46px; box-sizing: border-box; border: 2px solid #e8e8e8; border-radius: 50%; background: linear-gradient(#0e6a48 0, #0e6a48 36%, #4bca5e 36%, #4bca5e 100%); color: #fff; text-align: center; font: 14px/44px "Liberation Sans", sans-serif; box-shadow: 0 1px 3px rgba(0,0,0,.6); }

.sogou { position: absolute; left: 448px; top: 56px; display: flex; align-items: center; }
.sogou-s { width: 25px; height: 25px; background: #ee5a20; color: #fff; transform: rotate(-10deg); border-radius: 3px; text-align: center; font: 700 22px/25px "Liberation Sans", sans-serif; z-index: 1; }
.sogou-bar { margin-left: -3px; width: 160px; height: 23px; background: #fff; border: 1px solid #d6dee8; box-sizing: border-box; display: flex; align-items: center; gap: 6px; padding-left: 11px; color: #1f78d0; }
.zh { font-weight: 700; font-size: 13px; }
.dotcomma { width: 15px; text-align: center; font-weight: 700; }

.ring-mark { position: absolute; left: 472px; top: 335px; pointer-events: none; }
</style>

<style>
html, body { margin: 0; padding: 0; background: #f0f0f0; }
.l { font: 10px/16px "DejaVu Sans Mono", monospace; }
.c { font: 12px/16px "Noto Sans CJK SC", sans-serif; }
.phi { display: inline-block; width: 12px; text-align: center; font: 700 12px/16px "Noto Sans CJK SC", sans-serif; }
</style>
